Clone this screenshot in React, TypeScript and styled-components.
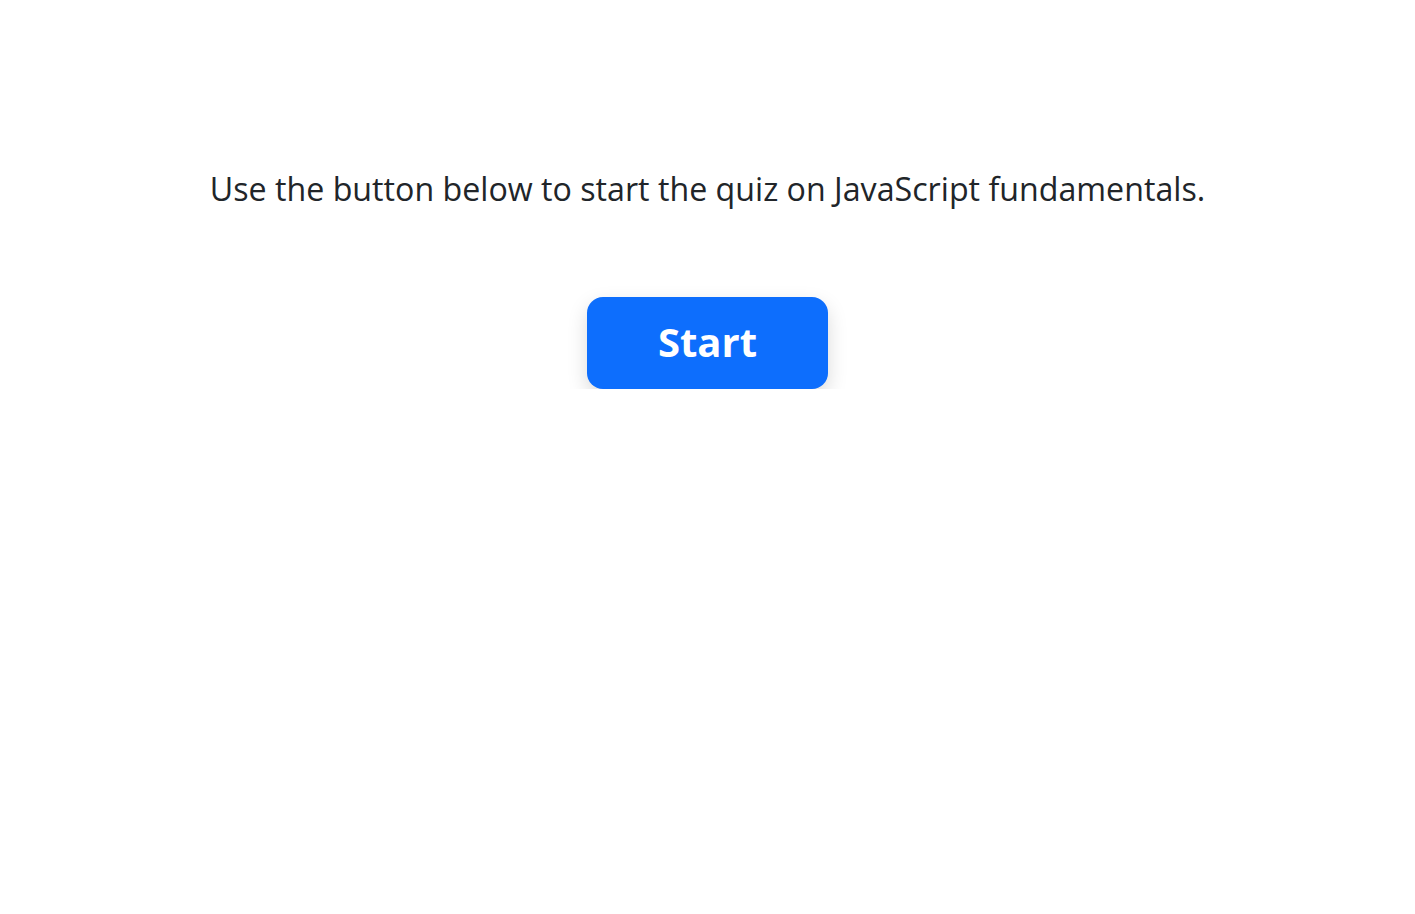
import React from "react";
import styled, { createGlobalStyle } from "styled-components";

const Global = createGlobalStyle`
  html, body { margin: 0; padding: 0; background: #fff; }
  body { font-family: "Open Sans", sans-serif; color: #212529; }
`;

const Page = styled.main`
  display: flex;
  flex-direction: column;
  align-items: center;
  padding-top: 165px;
`;

const Intro = styled.p`
  margin: 0;
  font-size: 32.2px;
  line-height: 48px;
  text-align: center;
`;

const StartButton = styled.button`
  margin-top: 84px;
  width: 241px;
  height: 92px;
  padding: 0 0 4px;
  border: none;
  border-radius: 16px;
  background: #0d6efd;
  color: #fff;
  font-family: "Open Sans", sans-serif;
  font-weight: 700;
  font-size: 40px;
  box-shadow: 0 8px 20px rgba(0, 0, 0, 0.15);
  cursor: pointer;
`;

export default function App() {
  return (
    <>
      <Global />
      <Page>
        <Intro>Use the button below to start the quiz on JavaScript fundamentals.</Intro>
        <StartButton>Start</StartButton>
      </Page>
    </>
  );
}
